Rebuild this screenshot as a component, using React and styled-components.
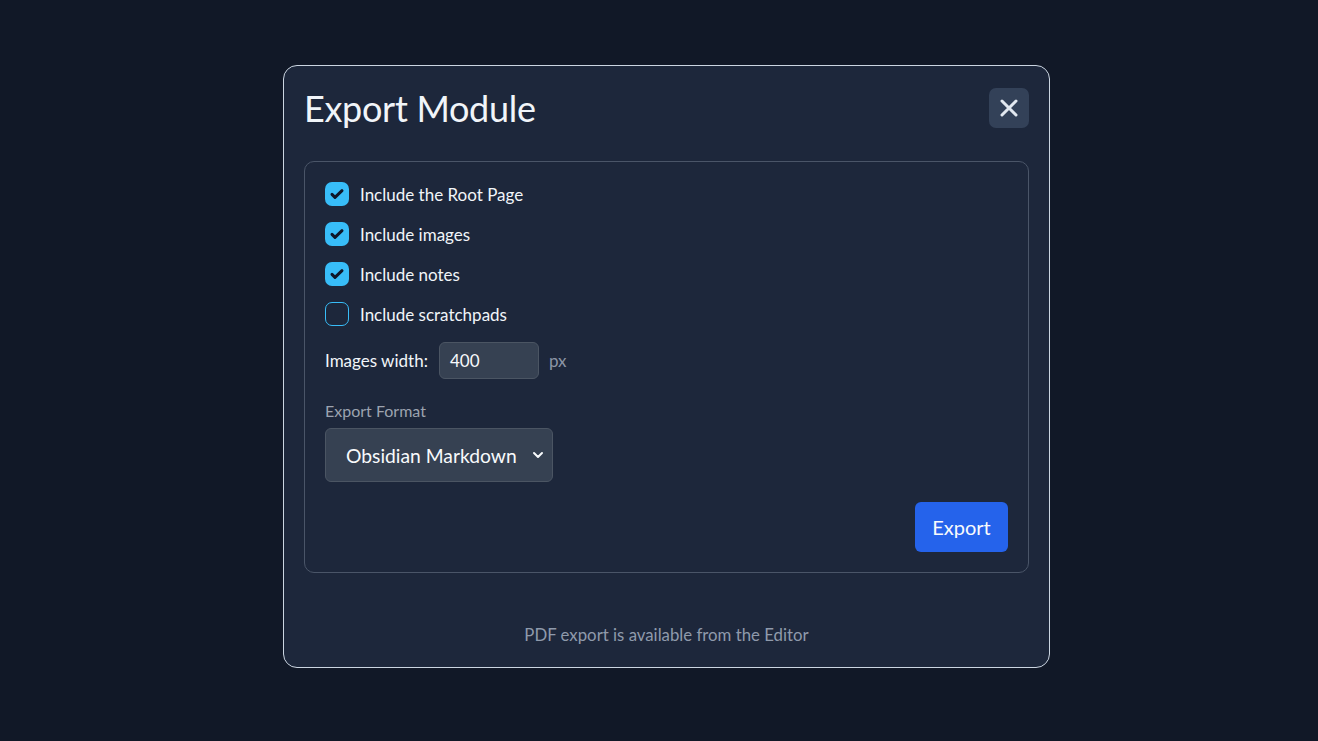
import React from 'react'
import styled, { createGlobalStyle } from 'styled-components'

const Global = createGlobalStyle`
  html, body {
    margin: 0;
    padding: 0;
    background: #111827;
    font-family: Lato, "Open Sans", sans-serif;
  }
`

const Page = styled.div`
  width: 1318px;
  height: 741px;
  display: flex;
  justify-content: center;
  padding: 65px 0 0 15px;
  box-sizing: border-box;
`

const Modal = styled.div`
  width: 767px;
  height: 603px;
  box-sizing: border-box;
  background: #1d273b;
  border: 1px solid #cbd5e1;
  border-radius: 14px;
  padding: 21px 20px 0 20px;
  display: flex;
  flex-direction: column;
`

const Header = styled.div`
  display: flex;
  justify-content: space-between;
  align-items: center;
  height: 42px;
`

const Title = styled.h1`
  margin: 0;
  font-size: 36px;
  font-weight: 400;
  color: #f1f5f9;
  letter-spacing: -0.3px;
`

const CloseButton = styled.button`
  width: 40px;
  height: 40px;
  border: none;
  border-radius: 7px;
  background: #334158;
  display: flex;
  align-items: center;
  justify-content: center;
  padding: 0;
`

const Panel = styled.div`
  margin-top: 32px;
  height: 412px;
  box-sizing: border-box;
  border: 1px solid #4a5568;
  border-radius: 10px;
  padding: 12px 20px 20px 20px;
  display: flex;
  flex-direction: column;
  flex-shrink: 0;
`

const CheckRow = styled.label`
  display: flex;
  align-items: center;
  gap: 11px;
  height: 40px;
  flex-shrink: 0;
  font-size: 17px;
  color: #f1f5f9;
`

const Box = styled.span`
  width: 24px;
  height: 24px;
  box-sizing: border-box;
  border-radius: 7px;
  display: flex;
  align-items: center;
  justify-content: center;
  background: ${p => (p.checked ? '#38bdf8' : 'transparent')};
  border: ${p => (p.checked ? 'none' : '1px solid #38bdf8')};
`

const WidthRow = styled.div`
  display: flex;
  align-items: center;
  margin-top: 8px;
  flex-shrink: 0;
  font-size: 17px;
  color: #f1f5f9;
`

const WidthInput = styled.div`
  width: 100px;
  height: 37px;
  box-sizing: border-box;
  margin-left: 11px;
  background: #364152;
  border: 1px solid #4b5563;
  border-radius: 6px;
  display: flex;
  align-items: center;
  padding-left: 10px;
  font-size: 17px;
  color: #f8fafc;
`

const Unit = styled.span`
  margin-left: 10px;
  color: #8b95a5;
  font-size: 17px;
`

const FieldLabel = styled.div`
  margin-top: 22px;
  font-size: 16px;
  color: #9ca3af;
`

const Select = styled.div`
  margin-top: 8px;
  width: 228px;
  height: 54px;
  flex-shrink: 0;
  box-sizing: border-box;
  background: #364152;
  border: 1px solid #4b5563;
  border-radius: 6px;
  display: flex;
  align-items: center;
  justify-content: space-between;
  padding: 0 6px 0 20px;
  font-size: 19.3px;
  color: #f8fafc;
`

const Actions = styled.div`
  display: flex;
  justify-content: flex-end;
  margin-top: 20px;
`

const ExportButton = styled.button`
  width: 93px;
  height: 50px;
  border: none;
  border-radius: 6px;
  background: #2563eb;
  color: #f8fafc;
  font-family: inherit;
  font-size: 20px;
`

const Footer = styled.div`
  margin-top: 51px;
  text-align: center;
  font-size: 16.8px;
  color: #8f9aab;
`

const Check = () => (
  <svg width="16" height="16" viewBox="0 0 24 24" fill="none" stroke="#0f172a" strokeWidth="4.5" strokeLinecap="round" strokeLinejoin="round">
    <path d="M4.5 12.5l4.5 4.5L19.5 7" />
  </svg>
)

const options = [
  { label: 'Include the Root Page', checked: true },
  { label: 'Include images', checked: true },
  { label: 'Include notes', checked: true },
  { label: 'Include scratchpads', checked: false },
]

export default function App() {
  return (
    <>
      <Global />
      <Page>
        <Modal>
          <Header>
            <Title>Export Module</Title>
            <CloseButton>
              <svg width="20" height="20" viewBox="0 0 20 20" stroke="#e2e8f0" strokeWidth="3" strokeLinecap="round">
                <path d="M3 3l14 14M17 3L3 17" />
              </svg>
            </CloseButton>
          </Header>
          <Panel>
            {options.map(o => (
              <CheckRow key={o.label}>
                <Box checked={o.checked}>{o.checked && <Check />}</Box>
                {o.label}
              </CheckRow>
            ))}
            <WidthRow>
              Images width:
              <WidthInput>400</WidthInput>
              <Unit>px</Unit>
            </WidthRow>
            <FieldLabel>Export Format</FieldLabel>
            <Select>
              Obsidian Markdown
              <svg width="16" height="16" viewBox="0 0 24 24" fill="none" stroke="#f8fafc" strokeWidth="3" strokeLinecap="round" strokeLinejoin="round">
                <path d="M6 9l6 6 6-6" />
              </svg>
            </Select>
            <Actions>
              <ExportButton>Export</ExportButton>
            </Actions>
          </Panel>
          <Footer>PDF export is available from the Editor</Footer>
        </Modal>
      </Page>
    </>
  )
}
